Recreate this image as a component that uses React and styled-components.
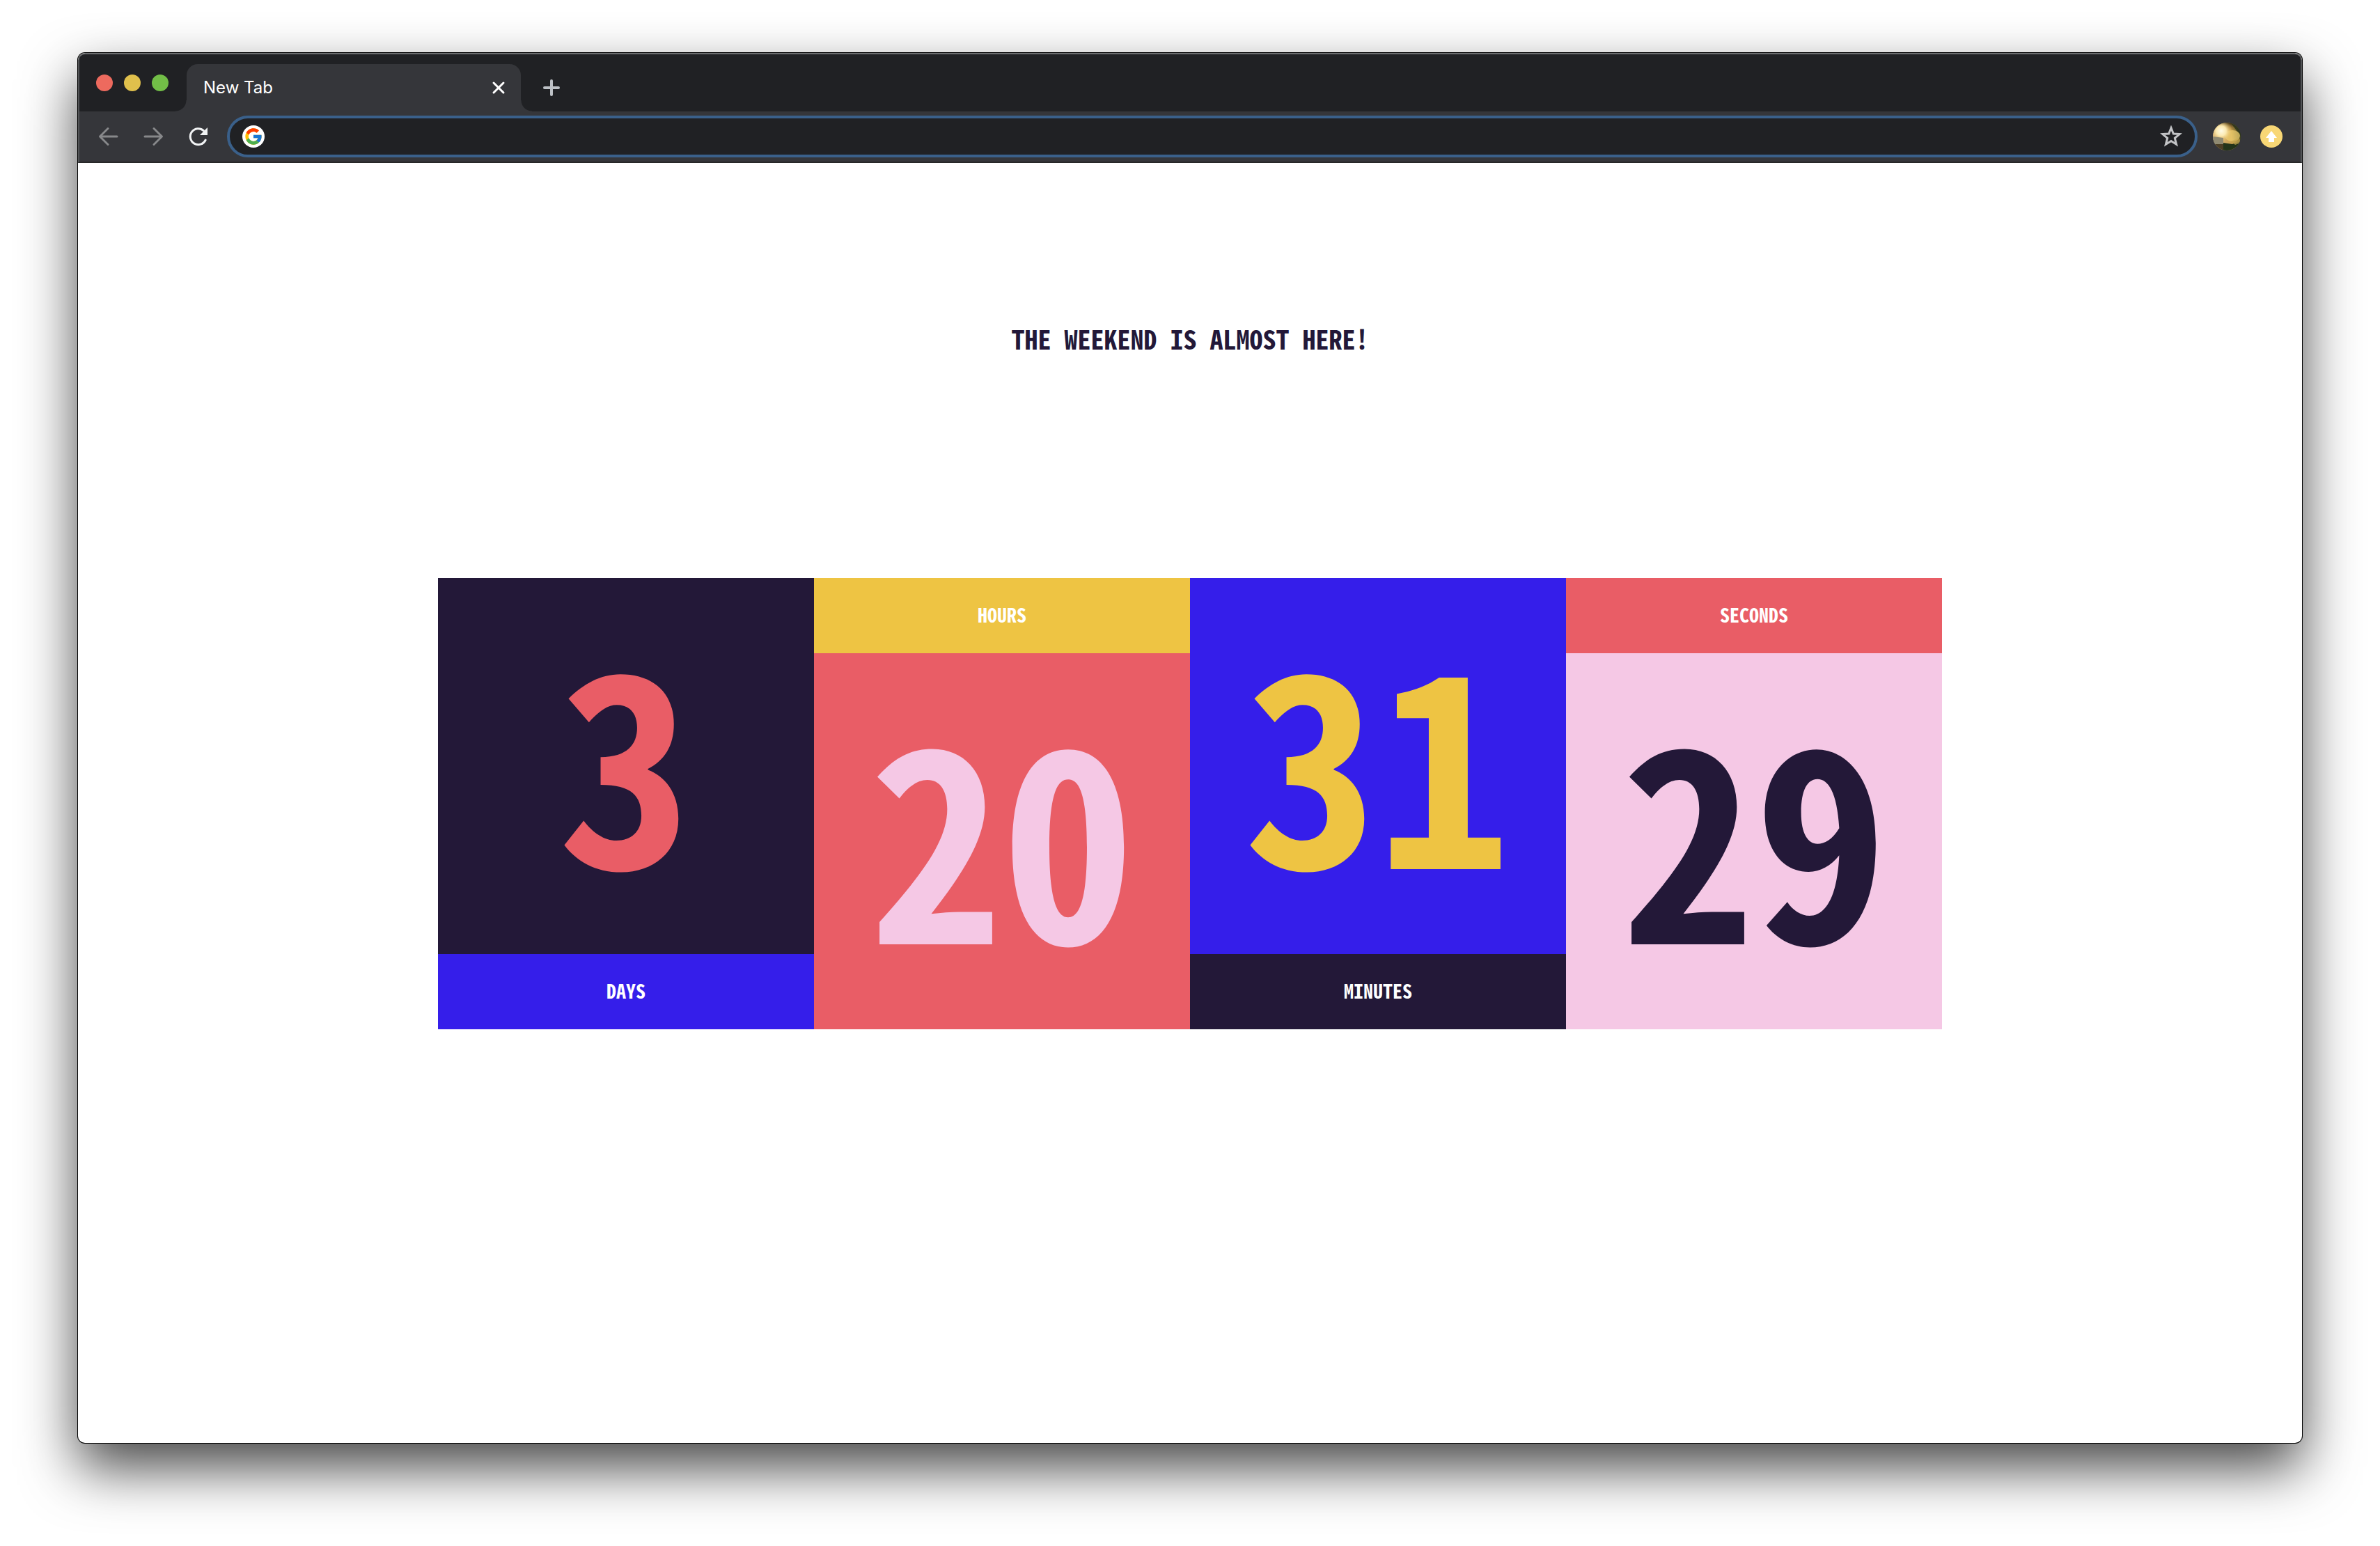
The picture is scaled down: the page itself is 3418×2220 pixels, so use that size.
import React from "react";
import styled, { createGlobalStyle } from "styled-components";
import { FcGoogle } from "react-icons/fc";

const color = {
  ink: "#231838",
  blue: "#351eea",
  coral: "#e95d66",
  yellow: "#eec443",
  pink: "#f5c8e5",
  white: "#ffffff",
  frame: "#202124",
  toolbar: "#35363a",
};

const uiFont = `Inter, Roboto, "Liberation Sans", sans-serif`;
const displayFont = `"Noto Sans Mono CJK JP", "Noto Sans CJK JP", "DejaVu Sans Mono", monospace`;

const GlobalStyle = createGlobalStyle`
  *, *::before, *::after { box-sizing: border-box; }
  body { margin: 0; background: #ffffff; }
  button, input { margin: 0; padding: 0; border: 0; background: none; font: inherit; color: inherit; }
  button { display: flex; align-items: center; justify-content: center; cursor: pointer; }
`;

const Desktop = styled.div`
  display: flex;
  min-height: 100vh;
  padding: 76px 112px 148px;
`;

const Window = styled.div`
  flex: 1;
  display: flex;
  flex-direction: column;
  overflow: hidden;
  border-radius: 10px;
  background: ${color.white};
  box-shadow: 0 0 0 1px #000000, 0 36px 80px rgba(0, 0, 0, 0.72);
`;

const Chrome = styled.header`
  background: ${color.frame};
  border-radius: 10px 10px 0 0;
  border: 2px solid #535557;
  border-top-color: #6c6e70;
  border-bottom-color: #282828;
  font-family: ${uiFont};
`;

const TabStrip = styled.div`
  display: flex;
  align-items: flex-end;
  height: 82px;
  padding-left: 24px;
`;

const Lights = styled.div`
  display: flex;
  gap: 16px;
  align-self: flex-start;
  padding-top: 29px;
  margin-right: 26px;
`;

const Light = styled.button`
  width: 24px;
  height: 24px;
  border-radius: 50%;
  background: ${(p) => p.$color};
`;

const Tab = styled.div`
  position: relative;
  display: flex;
  align-items: center;
  justify-content: space-between;
  width: 480px;
  height: 68px;
  padding: 0 20px 0 24px;
  border-radius: 16px 16px 0 0;
  background: ${color.toolbar};
  color: ${color.white};
  font-size: 24px;
  line-height: 32px;

  &::before,
  &::after {
    content: "";
    position: absolute;
    bottom: 0;
    width: 16px;
    height: 16px;
  }
  &::before {
    right: 100%;
    background: radial-gradient(circle at 0 0, transparent 15px, ${color.toolbar} 16px);
  }
  &::after {
    left: 100%;
    background: radial-gradient(circle at 100% 0, transparent 15px, ${color.toolbar} 16px);
  }
`;

const IconButton = styled.button`
  width: ${(p) => p.$size || 40}px;
  height: ${(p) => p.$size || 40}px;
  color: ${(p) => p.$color || color.white};
`;

const NewTab = styled(IconButton)`
  margin: 0 0 14px 24px;
`;

const Toolbar = styled.div`
  display: flex;
  align-items: center;
  gap: 24px;
  height: 72px;
  padding: 0 22px;
  background: ${color.toolbar};
`;

const Omnibox = styled.form`
  flex: 1;
  display: flex;
  align-items: center;
  gap: 12px;
  height: 60px;
  margin: 0 -2px;
  padding: 0 18px;
  border: 4px solid #3a608a;
  border-radius: 30px;
  background: ${color.frame};
`;

const SearchBadge = styled.label`
  display: flex;
  align-items: center;
  justify-content: center;
  width: 32px;
  height: 32px;
  border-radius: 50%;
  background: ${color.white};
  font-size: 28px;
`;

const AddressInput = styled.input`
  flex: 1;
  min-width: 0;
  height: 40px;
  outline: none;
  color: ${color.white};
  font-size: 28px;
`;

const Extensions = styled.div`
  display: flex;
  align-items: center;
  gap: 24px;
`;

const Page = styled.main`
  flex: 1;
  display: flex;
  flex-direction: column;
  align-items: center;
  padding: 224px 32px 96px;
  font-family: ${displayFont};
  font-weight: 700;
`;

const Title = styled.h1`
  margin: 0 0 316px;
  color: ${color.ink};
  font-size: 38px;
  line-height: 56px;
  text-align: center;
`;

const Countdown = styled.section`
  display: grid;
  grid-template-columns: repeat(4, 1fr);
  width: 100%;
  max-width: 2160px;
`;

const Tile = styled.div`
  display: flex;
  flex-direction: ${(p) => (p.$labelFirst ? "column-reverse" : "column")};
`;

const Value = styled.div`
  display: flex;
  align-items: center;
  justify-content: center;
  height: 540px;
  padding-bottom: 36px;
  background: ${(p) => p.$bg};
  color: ${(p) => p.$fg};
  font-size: 380px;
  line-height: 380px;
`;

const Label = styled.div`
  display: flex;
  align-items: center;
  justify-content: center;
  height: 108px;
  padding-bottom: 4px;
  background: ${(p) => p.$bg};
  color: ${color.white};
  font-size: 28px;
  line-height: 40px;
`;

const units = [
  { label: "DAYS", value: 3, bg: color.ink, fg: color.coral, labelBg: color.blue },
  { label: "HOURS", value: 20, bg: color.coral, fg: color.pink, labelBg: color.yellow, labelFirst: true },
  { label: "MINUTES", value: 31, bg: color.blue, fg: color.yellow, labelBg: color.ink },
  { label: "SECONDS", value: 29, bg: color.pink, fg: color.ink, labelBg: color.coral, labelFirst: true },
];

const Stroke = ({ size, d, width = 3 }) => (
  <svg
    width={size}
    height={size}
    viewBox={`0 0 ${size} ${size}`}
    fill="none"
    stroke="currentColor"
    strokeWidth={width}
    strokeLinecap="round"
    strokeLinejoin="round"
    aria-hidden="true"
  >
    <path d={d} />
  </svg>
);

const Reload = () => (
  <svg width="40" height="40" viewBox="0 0 40 40" aria-hidden="true">
    <path
      d="M31.2 25 A11.5 11.5 0 1 1 28.4 11.6"
      fill="none"
      stroke="currentColor"
      strokeWidth="3"
      strokeLinecap="round"
    />
    <path d="M34 7 V18 H23 Z" fill="currentColor" />
  </svg>
);

const Star = () => (
  <svg width="32" height="32" viewBox="0 0 32 32" aria-hidden="true">
    <path
      d="M16 3.6 L19.3 12 L28.2 12.6 L21.3 18.4 L23.6 27.3 L16 22.5 L8.4 27.3 L10.7 18.4 L3.8 12.6 L12.7 12 Z"
      fill="none"
      stroke="currentColor"
      strokeWidth="3"
    />
  </svg>
);

const Photo = () => (
  <svg width="40" height="40" viewBox="0 0 40 40" aria-hidden="true">
    <defs>
      <clipPath id="photo-clip">
        <circle cx="20" cy="20" r="20" />
      </clipPath>
      <linearGradient id="photo-sky" x1="0.1" y1="0.3" x2="1" y2="0.2">
        <stop offset="0" stopColor="#d9b57c" />
        <stop offset="0.6" stopColor="#c9a14e" />
        <stop offset="1" stopColor="#2a3414" />
      </linearGradient>
      <radialGradient id="photo-glow" cx="0.3" cy="0.3" r="0.4">
        <stop offset="0" stopColor="#fffbe6" />
        <stop offset="0.45" stopColor="#fbe9b0" />
        <stop offset="1" stopColor="#e2b85c" stopOpacity="0" />
      </radialGradient>
      <linearGradient id="photo-top" x1="0.4" y1="0" x2="0.5" y2="1">
        <stop offset="0" stopColor="#2c2410" />
        <stop offset="1" stopColor="#6b4a1c" stopOpacity="0" />
      </linearGradient>
    </defs>
    <g clipPath="url(#photo-clip)">
      <rect width="40" height="40" fill="url(#photo-sky)" />
      <rect width="40" height="11" fill="url(#photo-top)" />
      <path d="M25 0 L40 0 V19 L33 10 Z" fill="#27321a" opacity="0.8" />
      <ellipse cx="28" cy="19" rx="11" ry="8" fill="#efd070" opacity="0.7" />
      <rect width="40" height="40" fill="url(#photo-glow)" />
      <path d="M15 29 L28 31 L40 27 V40 H15 Z" fill="#24351a" />
      <path d="M26 27 L38 22 L40 29 L32 32 Z" fill="#c9aa50" opacity="0.7" />
      <path d="M0 20 L15 22 V31 H0 Z" fill="#8f8a72" />
      <path d="M0 31 H15 V40 H0 Z" fill="#4c3f26" />
    </g>
  </svg>
);

const Update = () => (
  <svg width="32" height="32" viewBox="0 0 32 32" aria-hidden="true">
    <circle cx="16" cy="16" r="16" fill="#f8d775" />
    <path d="M16 8 L24 18 H20 V24 H12 V18 H8 Z" fill="#ffffff" />
  </svg>
);

export default function App() {
  return (
    <>
      <GlobalStyle />
      <Desktop>
        <Window>
          <Chrome>
            <TabStrip>
              <Lights>
                <Light $color="#ed6a5e" aria-label="Close window" />
                <Light $color="#e0c04c" aria-label="Minimize window" />
                <Light $color="#72be47" aria-label="Zoom window" />
              </Lights>
              <Tab>
                <span>New Tab</span>
                <IconButton $size={24} aria-label="Close tab">
                  <Stroke size={24} d="M5 5 L19 19 M19 5 L5 19" />
                </IconButton>
              </Tab>
              <NewTab $color="#bdc1c6" aria-label="New tab">
                <Stroke size={40} width={4} d="M20 10 V30 M10 20 H30" />
              </NewTab>
            </TabStrip>
            <Toolbar>
              <IconButton $color="#87888a" aria-label="Back">
                <Stroke size={40} d="M32 20 H8 M19 8.5 L7.5 20 L19 31.5" />
              </IconButton>
              <IconButton $color="#87888a" aria-label="Forward">
                <Stroke size={40} d="M8 20 H32 M21 8.5 L32.5 20 L21 31.5" />
              </IconButton>
              <IconButton $color="#f1f3f4" aria-label="Reload">
                <Reload />
              </IconButton>
              <Omnibox>
                <SearchBadge htmlFor="address">
                  <FcGoogle aria-label="Search or type a URL" />
                </SearchBadge>
                <AddressInput id="address" type="text" autoComplete="off" />
                <IconButton type="button" $size={32} $color="#c3c4c6" aria-label="Bookmark this tab">
                  <Star />
                </IconButton>
              </Omnibox>
              <Extensions>
                <IconButton aria-label="Profile">
                  <Photo />
                </IconButton>
                <IconButton aria-label="Update">
                  <Update />
                </IconButton>
              </Extensions>
            </Toolbar>
          </Chrome>
          <Page>
            <Title>THE WEEKEND IS ALMOST HERE!</Title>
            <Countdown>
              {units.map((u) => (
                <Tile key={u.label} $labelFirst={u.labelFirst}>
                  <Value $bg={u.bg} $fg={u.fg}>{u.value}</Value>
                  <Label $bg={u.labelBg}>{u.label}</Label>
                </Tile>
              ))}
            </Countdown>
          </Page>
        </Window>
      </Desktop>
    </>
  );
}
